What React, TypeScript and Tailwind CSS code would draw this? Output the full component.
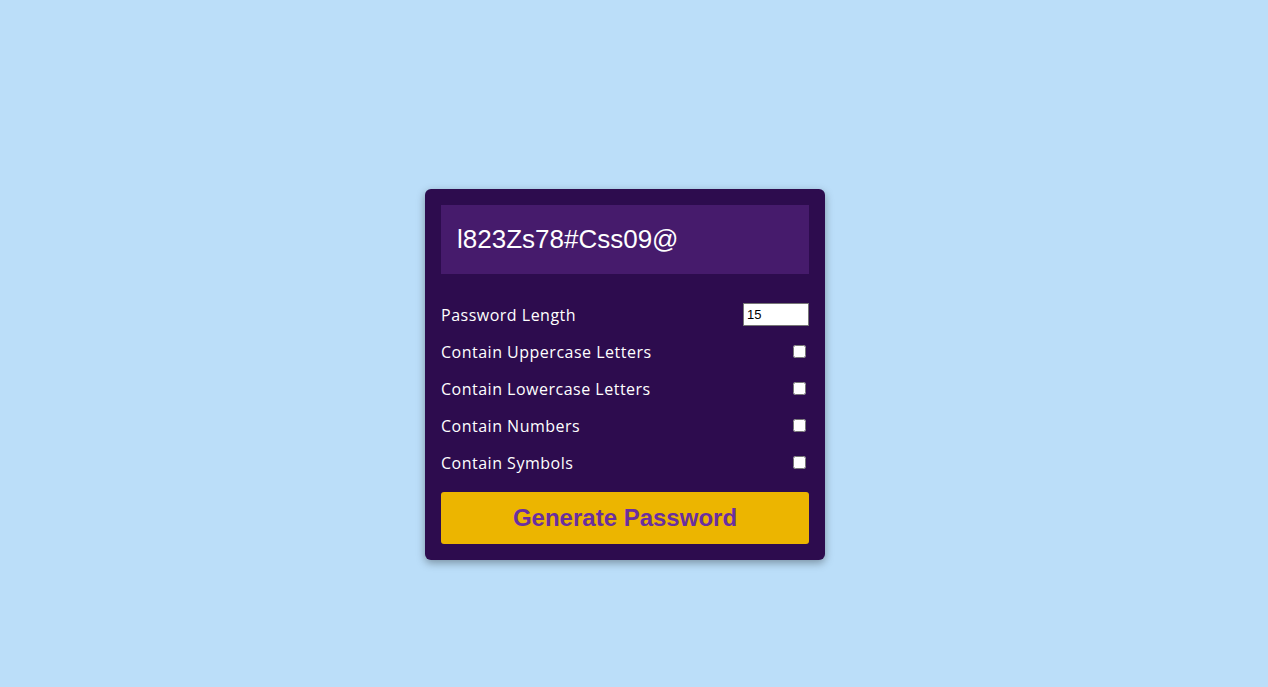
const options = [
  "Contain Uppercase Letters",
  "Contain Lowercase Letters",
  "Contain Numbers",
  "Contain Symbols",
];

export default function App() {
  return (
    <div className="min-h-screen w-full bg-[#bbdef9] flex justify-center items-start pt-[189px] pr-[18px]">
      <div className="w-[400px] bg-[#2d0c4e] rounded-[6px] p-4 shadow-[0_3px_8px_rgba(0,0,0,0.35)] font-['Open_Sans',sans-serif]">
        {/* result */}
        <div className="h-[69px] bg-[#461b6c] flex items-center px-4">
          <span className="text-white text-[26px] font-['Liberation_Sans',Arial,sans-serif]">
            l823Zs78#Css09@
          </span>
        </div>

        <div className="mt-[22px]">
          <div className="h-[37px] flex items-center justify-between">
            <label className="text-white text-[16px] tracking-[0.5px]">Password Length</label>
            <input
              type="number"
              defaultValue={15}
              className="w-[66px] h-[23px] bg-white text-black border border-[#767676] pl-[3px] text-[13px] font-['Liberation_Sans',Arial,sans-serif]"
            />
          </div>
          {options.map((o) => (
            <div key={o} className="h-[37px] flex items-center justify-between">
              <label className="text-white text-[16px] tracking-[0.5px]">{o}</label>
              <input type="checkbox" className="w-[13px] h-[13px] mr-[3px]" />
            </div>
          ))}
        </div>

        <button className="mt-[11px] w-full h-[52px] bg-[#ecb500] rounded-[3px] text-[#6a2fa0] text-[24px] font-bold font-['Liberation_Sans',Arial,sans-serif]">
          Generate Password
        </button>
      </div>
    </div>
  );
}
